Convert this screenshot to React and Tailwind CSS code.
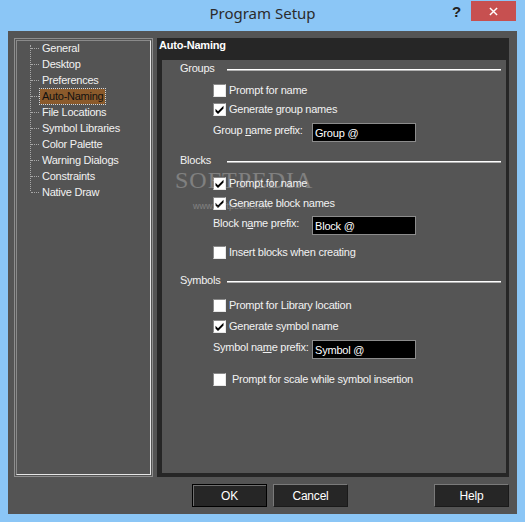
import React from 'react';

const FONT = { fontFamily: '"Liberation Sans", Arial, sans-serif' };

const TREE = [
  'General',
  'Desktop',
  'Preferences',
  'Auto-Naming',
  'File Locations',
  'Symbol Libraries',
  'Color Palette',
  'Warning Dialogs',
  'Constraints',
  'Native Draw',
];

function CheckBox({ checked }) {
  return (
    <span className="w-[13px] h-[13px] shrink-0 bg-white border border-t-[#8a8a8a] border-l-[#8a8a8a] border-r-[#e8e8e8] border-b-[#e8e8e8] flex items-center justify-center">
      {checked && (
        <svg viewBox="0 0 11 11" className="w-[11px] h-[11px]">
          <path d="M1.5 4.8 L4 7.3 L9.5 1.8 L9.5 4.6 L4 10 L1.5 7.5 Z" fill="#000" />
        </svg>
      )}
    </span>
  );
}

function CheckRow({ checked, label, mt, gap = 'gap-[3px]' }) {
  return (
    <div className={`flex items-center ${gap} pl-[51px] h-[13px] ${mt}`}>
      <CheckBox checked={checked} />
      <span className="text-[11px] tracking-[-0.25px] text-[#f2f2f2] leading-none whitespace-nowrap">{label}</span>
    </div>
  );
}

function PrefixRow({ before, u, after, value, mt }) {
  return (
    <div className={`flex items-start pl-[51px] h-[19px] ${mt}`}>
      <span className="text-[11px] tracking-[-0.25px] text-[#f2f2f2] leading-none w-[99px] pt-[2px] whitespace-nowrap">
        {before}
        <span className="underline underline-offset-1">{u}</span>
        {after}
      </span>
      <div className="w-[104px] h-[19px] bg-black border border-[#8c8c8c] text-[11px] tracking-[-0.2px] text-white leading-none pl-[2px] pt-[4px]">
        {value}
      </div>
    </div>
  );
}

function Heading({ label, mt }) {
  return (
    <div className={`flex items-center h-[14px] ${mt}`}>
      <span className="pl-[18px] w-[65px] text-[11px] tracking-[-0.25px] text-[#f2f2f2] leading-none">{label}</span>
      <div className="flex-1 mr-[5px] mt-[3px] h-[2px] bg-white border-b border-[#b0b0b0]" />
    </div>
  );
}

function Btn({ children, def }) {
  return (
    <div
      className={`w-[75px] h-[23px] flex items-center justify-center text-[12px] tracking-[-0.2px] text-white ${
        def
          ? 'border border-black bg-[#262626] shadow-[inset_1px_1px_0_#6f6f6f]'
          : 'border border-t-[#7a7a7a] border-l-[#7a7a7a] border-r-[#1a1a1a] border-b-[#1a1a1a] bg-[#262626]'
      }`}
    >
      {children}
    </div>
  );
}

export default function App() {
  return (
    <div className="w-[525px] h-[522px] bg-[#8bc6f6] flex flex-col relative overflow-hidden" style={FONT}>
      {/* title bar */}
      <div className="h-[31px] shrink-0 flex items-start relative">
        <div
          className="flex-1 text-center text-[15px] text-[#2b2b2b] pt-[3px] leading-[20px]"
          style={{ fontFamily: '"Noto Sans", "Open Sans", sans-serif' }}
        >
          Program Setup
        </div>
        <span className="absolute left-[452px] top-[1px] text-[15px] font-bold text-[#222]">?</span>
        <div className="absolute left-[471px] top-[1px] w-[45px] h-[20px] bg-[#c75050] flex items-center justify-center">
          <svg viewBox="0 0 10 10" className="w-[9px] h-[9px]">
            <path d="M1 1 L9 9 M9 1 L1 9" stroke="#fff" strokeWidth="1.6" />
          </svg>
        </div>
      </div>

      {/* client */}
      <div className="mx-[8px] h-[483px] bg-[#545454] flex flex-col pt-[7px] pl-[6px] pr-[8px] relative">
        <div className="flex h-[439px] gap-[4px]">
          {/* tree */}
          <div className="w-[139px] h-full border border-[#8e8e8e] p-[1px]">
            <div className="w-full h-full border border-t-[#8a8a8a] border-l-[#8a8a8a] border-r-[#e6e6e6] border-b-[#e6e6e6] relative">
              <div className="absolute left-[13px] top-[4px] h-[146px] border-l border-dotted border-[#a8a8a8]" />
              <div className="-mt-[1px]">
                {TREE.map((t) => (
                  <div key={t} className="flex items-center h-[16px]">
                    <div className="ml-[14px] w-[8px] border-t border-dotted border-[#a8a8a8]" />
                    <span
                      className={`text-[11px] tracking-[-0.25px] leading-none whitespace-nowrap ${
                        t === 'Auto-Naming'
                          ? 'bg-[#8b5a2b] text-[#111] outline outline-1 outline-dotted outline-[#d8d8d8] px-[2px] py-[2px] ml-[1px]'
                          : 'text-[#f2f2f2] ml-[3px]'
                      }`}
                    >
                      {t}
                    </span>
                  </div>
                ))}
              </div>
            </div>
          </div>

          {/* right pane */}
          <div className="flex-1 h-full bg-[#262626] flex flex-col">
            <div className="h-[22px] pl-[2px] pt-[2px] text-[11px] tracking-[-0.2px] font-bold text-white leading-none">
              Auto-Naming
            </div>
            <div className="ml-[5px] mr-[3px] mb-[4px] flex-1 bg-[#555555] flex flex-col">
              <Heading label="Groups" mt="mt-[1px]" />
              <CheckRow checked={false} label="Prompt for name" mt="mt-[9px]" />
              <CheckRow checked label="Generate group names" mt="mt-[6px]" />
              <PrefixRow before="Group " u="n" after="ame prefix:" value="Group @" mt="mt-[7px]" />

              <Heading label="Blocks" mt="mt-[11px]" />
              <CheckRow checked label="Prompt for name" mt="mt-[10px]" />
              <CheckRow checked label="Generate block names" mt="mt-[7px]" />
              <PrefixRow before="Block n" u="a" after="me prefix:" value="Block @" mt="mt-[6px]" />
              <CheckRow checked={false} label="Insert blocks when creating" mt="mt-[11px]" />

              <Heading label="Symbols" mt="mt-[14px]" />
              <CheckRow checked={false} label="Prompt for Library location" mt="mt-[12px]" />
              <CheckRow checked label="Generate symbol name" mt="mt-[8px]" />
              <PrefixRow before="Symbol na" u="m" after="e prefix:" value="Symbol @" mt="mt-[7px]" />
              <CheckRow
                checked={false}
                label="Prompt for scale while symbol insertion"
                mt="mt-[14px]"
                gap="gap-[6px]"
              />
            </div>
          </div>
        </div>

        {/* buttons */}
        <div className="flex mt-[7px] pl-[178px] gap-[6px]">
          <Btn def>OK</Btn>
          <Btn>Cancel</Btn>
          <div className="ml-auto">
            <Btn>Help</Btn>
          </div>
        </div>

        {/* watermark */}
        <div className="absolute left-[167px] top-[137px] pointer-events-none opacity-25 text-white">
          <div className="text-[24px] tracking-[1px] leading-none" style={{ fontFamily: '"Liberation Serif", serif' }}>
            SOFTPEDIA
          </div>
          <div className="text-[9px] mt-[8px] ml-[18px]">www.softpedia.com</div>
        </div>
      </div>
    </div>
  );
}
